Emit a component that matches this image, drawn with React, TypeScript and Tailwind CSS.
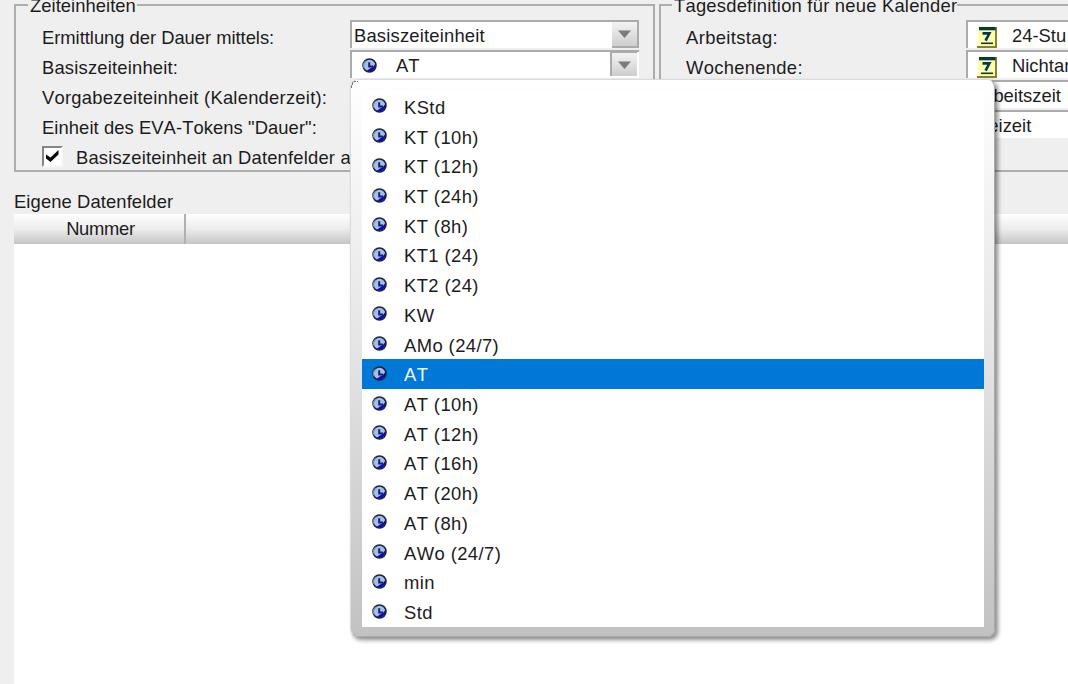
import React from "react";

const units = [
  "KStd", "KT (10h)", "KT (12h)", "KT (24h)", "KT (8h)", "KT1 (24)", "KT2 (24)", "KW", "AMo (24/7)",
  "AT", "AT (10h)", "AT (12h)", "AT (16h)", "AT (20h)", "AT (8h)", "AWo (24/7)", "min", "Std",
];

function ClockIcon() {
  return (
    <svg className="block h-[15px] w-[15px] shrink-0" viewBox="0 0 15 15">
      <circle cx="7.5" cy="7.5" r="6.5" fill="#a3bdf5" />
      <path d="M4.5 13A6.5 6.5 0 0 0 13.5 5.5L11.5 8.5L8 10.5Z" fill="#0808d0" />
      <circle cx="7.5" cy="7.5" r="6.5" fill="none" stroke="#20242f" strokeWidth="1.5" />
      <path d="M2 10A5.8 5.8 0 0 1 4 3" fill="none" stroke="#7c879c" strokeWidth="1.2" />
      <path d="M7.2 4.2v4.3h3.9" fill="none" stroke="#1b2550" strokeWidth="2" />
    </svg>
  );
}

function CalendarIcon() {
  return (
    <svg className="block h-[22px] w-5 shrink-0" viewBox="0 0 20 22">
      <path d="M1 1H20V22H0V20H1Z" fill="#85812c" />
      <path d="M1 0H18V20H1Z" fill="#ffffa8" />
      <path d="M2 1H18.5V4.3H2Z" fill="#063752" />
      <path d="M5.5 7.4H12.4L8.6 14.6" fill="none" stroke="#063752" strokeWidth="2.6" />
      <path d="M4 17.3H16" stroke="#063752" strokeWidth="1.6" />
    </svg>
  );
}

function ArrowButton({ className }: { className: string }) {
  return (
    <span className={`flex w-[27px] shrink-0 items-center justify-center bg-linear-to-b from-[#f4f4f4] to-[#cdcdcd] ${className}`}>
      <svg className="h-[8px] w-[13px]" viewBox="0 0 13 8">
        <path d="M0 0.5H13L6.5 8Z" fill="#7b7b7b" />
      </svg>
    </span>
  );
}

function Combo({ children }: { children: React.ReactNode }) {
  return (
    <div className="flex h-[28px] w-full border-t-2 border-l-2 border-[#ababab] bg-white">{children}</div>
  );
}

function GroupTitle({ children, className }: { children: string; className: string }) {
  return (
    <span className={`absolute -top-[10px] bg-[#efefef] leading-5 ${className}`}>{children}</span>
  );
}

export default function App() {
  return (
    <main className="relative h-[684px] w-[1068px] overflow-hidden bg-[#efefef] font-['Liberation_Sans',Arial,sans-serif] text-[18.4px] leading-[30px] whitespace-nowrap text-[#1c1c1c] [font-kerning:none]">
      <div className="flex gap-[4px] pt-[4px] pl-[14px]">
        <section className="relative flex h-[168px] w-[641px] shrink-0 border-2 border-[#adadad]">
          <GroupTitle className="left-[12px] pr-px pl-0.5 tracking-[0.04px]">Zeiteinheiten</GroupTitle>
          <div className="flex w-[334px] shrink-0 flex-col pt-[17px] pl-[26px]">
            <span className="h-[30px] tracking-[-0.03px]">Ermittlung der Dauer mittels:</span>
            <span className="h-[30px] tracking-[0.19px]">Basiszeiteinheit:</span>
            <span className="h-[30px] tracking-[0.24px]">Vorgabezeiteinheit (Kalenderzeit):</span>
            <span className="h-[30px] tracking-[0.07px]">Einheit des EVA-Tokens "Dauer":</span>
            <label className="flex h-[30px] items-center">
              <span className="mr-[13px] mb-[4px] flex h-[21px] w-[21px] shrink-0 items-center justify-center border-2 border-t-[#858585] border-r-[#f8f8f8] border-b-[#f8f8f8] border-l-[#858585] bg-white">
                <svg className="h-[15px] w-[15px]" viewBox="0 0 15 15">
                  <path d="M1 5.5L5.5 8.5L13.5 1V5.5L5.5 13L1 9.5Z" fill="#080808" />
                </svg>
              </span>
              <span className="tracking-[0.18px]">Basiszeiteinheit an Datenfelder a</span>
            </label>
          </div>
          <div className="flex w-[289px] shrink-0 flex-col gap-0.5 pt-[14px]">
            <Combo>
              <span className="grow pl-0.5 leading-[27px] tracking-[0.19px]">Basiszeiteinheit</span>
              <ArrowButton className="border-r-2 border-b-2 border-[#ababab]" />
            </Combo>
            <Combo>
              <span className="flex grow items-center gap-[19px] pl-[10px] leading-[28px]">
                <ClockIcon /><span className="pt-[2px]">AT</span>
              </span>
              <ArrowButton className="mr-[2px] mb-[2px] border-t border-l-2 border-[#ababab]" />
            </Combo>
          </div>
        </section>

        <section className="relative flex h-[168px] w-[500px] shrink-0 border-2 border-[#adadad]">
          <GroupTitle className="left-[11px] pr-0 pl-0.5 tracking-[0.22px]">Tagesdefinition für neue Kalender</GroupTitle>
          <div className="flex w-[305px] shrink-0 flex-col pt-[17px] pl-[25px]">
            <span className="h-[30px] tracking-[0.37px]">Arbeitstag:</span>
            <span className="h-[30px] tracking-[0.3px]">Wochenende:</span>
          </div>
          <div className="flex w-[220px] shrink-0 flex-col gap-0.5 pt-[14px]">
            <Combo>
              <span className="flex items-start gap-[15px] pl-[9px] leading-[27px]">
                <span className="pt-[4px]"><CalendarIcon /></span>24-Stu
              </span>
            </Combo>
            <Combo>
              <span className="flex items-start gap-[15px] pl-[9px] leading-[27px]">
                <span className="pt-[4px]"><CalendarIcon /></span>Nichtar
              </span>
            </Combo>
            <Combo><span className="pl-[7px] leading-[27px]">Arbeitszeit</span></Combo>
            <Combo><span className="pl-[3px] leading-[27px]">Freizeit</span></Combo>
          </div>
        </section>
      </div>

      <section className="mt-[15px] ml-[14px]">
        <h2 className="h-[27px] tracking-[0.1px]">Eigene Datenfelder</h2>
        <div className="flex h-[30px] bg-linear-to-b from-white via-[#ececec] to-[#c6c6c6]">
          <span className="w-[172px] border-r-2 border-[#b0b0b0] pl-[3px] text-center tracking-[-0.3px]">Nummer</span>
        </div>
        <div className="h-[440px] bg-white" />
      </section>

      <div className="absolute top-[79px] left-[350px] h-[558px] w-[645px] rounded-[8px] border border-t-[#dcdcdc] border-r-[#aaaaaa] border-b-[#aaaaaa] border-l-[#dcdcdc] bg-linear-to-b from-white via-[#e4e4e4] via-50% to-[#c2c2c2] pt-[12px] pr-[10px] pl-[11px] shadow-[3px_3px_4px_rgba(0,0,0,0.45)]">
        <svg className="absolute top-0 left-0 h-[9px] w-[10px]" viewBox="0 0 10 9">
          <path d="M0.5 8V5.5H1.5V2.5H3V1.5H7" fill="none" stroke="#777777" strokeWidth="1" strokeDasharray="3 1" />
        </svg>
        <ul className="h-[535px] bg-white">
          {units.map((unit) => (
            <li
              key={unit}
              className={`flex h-[29.72px] items-center gap-[17px] pl-[10px] tracking-[0.42px] ${unit === "AT" ? "bg-[#0078d7] text-[#eef6ff]" : ""}`}
            >
              <span className="pb-[2px]"><ClockIcon /></span>
              <span className="pt-[2px] leading-[26px]">{unit}</span>
            </li>
          ))}
        </ul>
      </div>
    </main>
  );
}
